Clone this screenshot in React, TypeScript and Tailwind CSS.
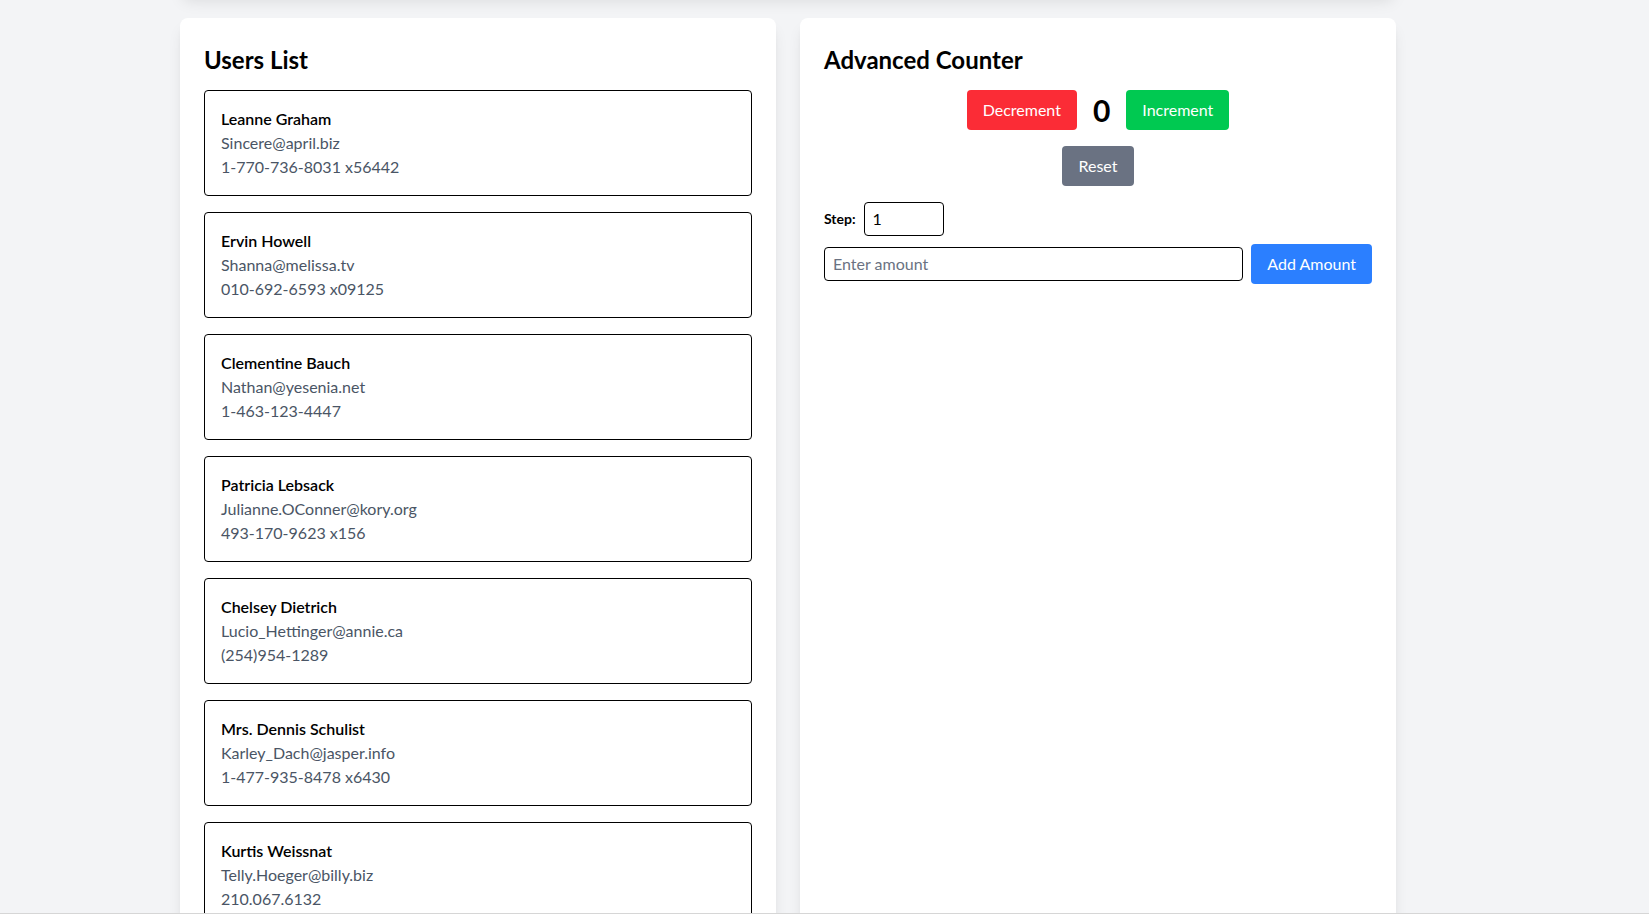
import { useState } from 'react';

const users = [
  { name: 'Leanne Graham', email: 'Sincere@april.biz', phone: '1-770-736-8031 x56442' },
  { name: 'Ervin Howell', email: 'Shanna@melissa.tv', phone: '010-692-6593 x09125' },
  { name: 'Clementine Bauch', email: 'Nathan@yesenia.net', phone: '1-463-123-4447' },
  { name: 'Patricia Lebsack', email: 'Julianne.OConner@kory.org', phone: '493-170-9623 x156' },
  { name: 'Chelsey Dietrich', email: 'Lucio_Hettinger@annie.ca', phone: '(254)954-1289' },
  { name: 'Mrs. Dennis Schulist', email: 'Karley_Dach@jasper.info', phone: '1-477-935-8478 x6430' },
  { name: 'Kurtis Weissnat', email: 'Telly.Hoeger@billy.biz', phone: '210.067.6132' },
  { name: 'Nicholas Runolfsdottir V', email: 'Sherwood@rosamond.me', phone: '586.493.6943 x140' },
  { name: 'Glenna Reichert', email: 'Chaim_McDermott@dana.io', phone: '(775)976-6794 x41206' },
  { name: 'Clementina DuBuque', email: 'Rey.Padberg@karina.biz', phone: '024-648-3804' },
];

function UsersList() {
  return (
    <div className="bg-white rounded-lg shadow-lg p-6">
      <h2 className="text-2xl font-bold pt-0.5 mb-3.5">Users List</h2>
      <ul className="space-y-4">
        {users.map((u) => (
          <li key={u.email} className="border border-black rounded p-4">
            <p className="font-semibold text-black">{u.name}</p>
            <p className="text-gray-600">{u.email}</p>
            <p className="text-gray-600">{u.phone}</p>
          </li>
        ))}
      </ul>
    </div>
  );
}

function AdvancedCounter() {
  const [count, setCount] = useState(0);
  const [step, setStep] = useState(1);
  const [amount, setAmount] = useState('');

  const addAmount = () => {
    const n = Number(amount);
    if (!amount.trim() || Number.isNaN(n)) return;
    setCount((c) => c + n);
    setAmount('');
  };

  return (
    <div className="bg-white rounded-lg shadow-lg p-6">
      <h2 className="text-2xl font-bold pt-0.5 mb-3.5">Advanced Counter</h2>
      <div className="flex items-center justify-center gap-4">
        <button
          onClick={() => setCount((c) => c - step)}
          className="bg-red-500 text-white px-4 py-2 rounded"
        >
          Decrement
        </button>
        <span className="text-3xl font-bold">{count}</span>
        <button
          onClick={() => setCount((c) => c + step)}
          className="bg-green-500 text-white px-4 py-2 rounded"
        >
          Increment
        </button>
      </div>
      <div className="flex justify-center mt-4">
        <button onClick={() => setCount(0)} className="bg-gray-500 text-white px-4 py-2 rounded">
          Reset
        </button>
      </div>
      <div className="flex items-center gap-2 mt-4">
        <label className="text-sm font-bold">Step:</label>
        <input
          type="number"
          value={step}
          onChange={(e) => setStep(Number(e.target.value))}
          className="w-20 border border-black rounded px-2 py-1 [appearance:textfield] [&::-webkit-inner-spin-button]:appearance-none"
        />
      </div>
      <div className="flex items-center gap-2 mt-2">
        <input
          value={amount}
          onChange={(e) => setAmount(e.target.value)}
          placeholder="Enter amount"
          className="flex-1 border border-black rounded px-2 py-1 placeholder:text-gray-500"
        />
        <button onClick={addAmount} className="bg-blue-500 text-white px-4 py-2 rounded">
          Add Amount
        </button>
      </div>
    </div>
  );
}

export default function App() {
  return (
    <div className="min-h-screen bg-gray-100 font-['Lato',sans-serif] text-black overflow-hidden">
      <div className="pl-[180px] -mt-[206px]">
        <div className="grid grid-cols-2 gap-6 w-[1216px]">
          <div className="col-span-2 h-[200px] bg-white rounded-lg shadow-lg" />
          <UsersList />
          <AdvancedCounter />
        </div>
      </div>
      <div className="fixed bottom-0 left-0 right-0 h-px bg-[#d6d6d6]" />
    </div>
  );
}
